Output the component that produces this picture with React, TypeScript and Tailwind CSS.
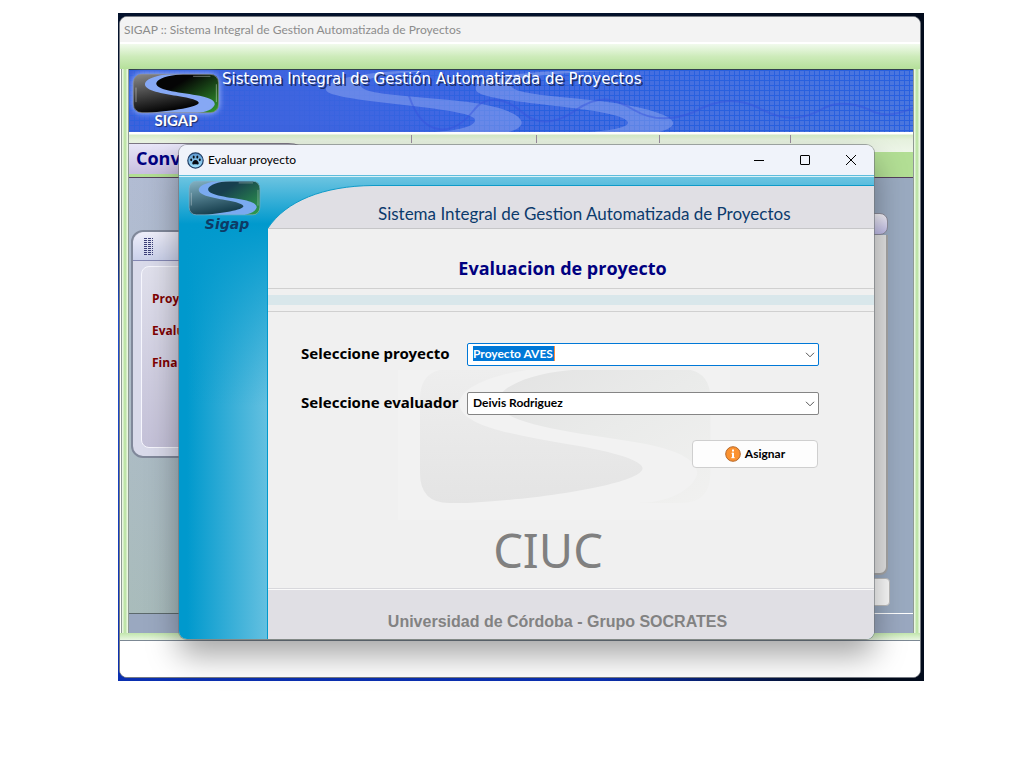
import { useState } from "react";

const LOWER =
  "M82 3C50 10 35 20 35 30C35 50 90 58 130 65C175 72 197 80 197 86C197 98 120 112 42 116H26Q0 116 0 90V26Q0 0 26 0H100Z";
const UPPER =
  "M132 1C90 5 69 18 69 28C69 50 150 56 200 65C235 72 247 82 245 92C240 105 220 116 192 116H231Q257 116 257 90V26Q257 0 231 0H150Z";

type LogoProps = { id: string; from: string; mid: string; to: string; river: string; className: string };

function Logo({ id, from, mid, to, river, className }: LogoProps) {
  return (
    <svg viewBox="-4 -4 265 124" preserveAspectRatio="none" className={className} aria-hidden="true">
      <defs>
        <linearGradient id={`${id}-a`} x1="0" y1="0" x2="0.3" y2="1">
          <stop offset="0" stopColor={from} />
          <stop offset="1" stopColor={mid} />
        </linearGradient>
        <linearGradient id={`${id}-b`} x1="0" y1="0" x2="1" y2="1">
          <stop offset="0.3" stopColor={mid} />
          <stop offset="1" stopColor={to} />
        </linearGradient>
      </defs>
      <rect width="257" height="116" rx="26" fill={river} />
      <path d={LOWER} fill={`url(#${id}-a)`} />
      <path d={UPPER} fill={`url(#${id}-b)`} />
      <path d="M180 6H232M8 40V84M250 30V84" stroke="#fff" strokeOpacity="0.4" strokeWidth="3" fill="none" />
      <rect width="257" height="116" rx="26" fill="none" stroke={from} strokeOpacity="0.7" strokeWidth="3" />
    </svg>
  );
}

function Watermark() {
  return (
    <svg viewBox="0 0 332 150" className="h-[150px] w-[332px]" aria-hidden="true">
      <defs>
        <linearGradient id="wm-a" x1="0" y1="0" x2="0" y2="1">
          <stop offset="0" stopColor="#eeeeee" />
          <stop offset="1" stopColor="#e4e4e4" />
        </linearGradient>
        <linearGradient id="wm-b" x1="0" y1="0" x2="1" y2="1">
          <stop offset="0" stopColor="#e3e3e3" />
          <stop offset="0.5" stopColor="#eaebea" />
          <stop offset="1" stopColor="#f1f1f0" />
        </linearGradient>
      </defs>
      <rect width="332" height="150" fill="#f2f2f2" />
      <g transform="translate(22 -1) scale(1.13 1.155)">
        <path d={LOWER} fill="url(#wm-a)" />
        <path d={UPPER} fill="url(#wm-b)" />
      </g>
    </svg>
  );
}

function Paw() {
  return (
    <svg viewBox="0 0 17 17" className="size-[17px]" aria-hidden="true">
      <defs>
        <linearGradient id="paw" x1="0" y1="0" x2="0" y2="1">
          <stop offset="0" stopColor="#5d97cf" />
          <stop offset="1" stopColor="#a4e6ff" />
        </linearGradient>
      </defs>
      <circle cx="8.500" cy="8.500" r="7.700" fill="url(#paw)" stroke="#223f66" strokeWidth="1.200" />
      <g fill="#080c14">
        <ellipse cx="6.700" cy="5" rx="1" ry="1.600" />
        <ellipse cx="10.300" cy="5" rx="1" ry="1.600" />
        <ellipse cx="4.200" cy="7.800" rx="1" ry="1.400" />
        <ellipse cx="12.800" cy="7.800" rx="1" ry="1.400" />
        <path d="M8.500 8C6.700 8 5.200 10 5.300 11.400C5.400 13 7 12.300 8.500 12.300S11.600 13 11.700 11.400C11.800 10 10.300 8 8.500 8Z" />
      </g>
    </svg>
  );
}

function BannerArt() {
  return (
    <svg
      viewBox="0 0 784 62"
      preserveAspectRatio="none"
      className="absolute inset-0 size-full"
      aria-hidden="true"
    >
      <defs>
        <pattern id="grid" width="5" height="5" patternUnits="userSpaceOnUse">
          <path d="M0 .5H5M.5 0V5" stroke="#2860df" />
        </pattern>
        <linearGradient id="gridfade">
          <stop offset="0" stopColor="#fff" stopOpacity="0.7" />
          <stop offset="0.12" stopColor="#fff" stopOpacity="0.4" />
          <stop offset="0.2" stopColor="#fff" stopOpacity="0.1" />
          <stop offset="0.3" stopColor="#fff" stopOpacity="0.3" />
          <stop offset="0.5" stopColor="#fff" />
        </linearGradient>
        <mask id="gridmask">
          <rect width="784" height="62" fill="url(#gridfade)" />
        </mask>
      </defs>
      <rect width="784" height="62" fill="url(#grid)" mask="url(#gridmask)" />
      <path
        d="M270 1C220 4 195 12 197 20C200 32 330 36 345 48C350 56 330 60 306 62H380C400 56 396 46 370 38C330 26 235 28 232 16C232 8 260 3 300 1Z"
        fill="#8fa8f0"
        fillOpacity="0.5"
      />
      <path
        d="M430 1C370 4 345 10 347 20C350 34 490 36 499 52C500 58 480 60 462 62H530C552 56 548 48 520 40C470 26 388 28 382 16C380 8 420 3 480 1Z"
        fill="#8fa8f0"
        fillOpacity="0.5"
      />
      <path
        d="M280 26C295 70 325 66 345 40C355 26 375 26 393 42C405 54 425 56 447 40C470 24 485 28 505 40C525 52 545 50 565 42C590 28 610 28 630 38C655 52 675 50 695 38C710 30 730 34 745 42C760 48 775 42 784 38"
        fill="none"
        stroke="#3553dc"
        strokeOpacity="0.45"
        strokeWidth="2"
      />
    </svg>
  );
}

type ComboProps = {
  id: string;
  label: string;
  value: string;
  options: string[];
  onChange: (value: string) => void;
  active?: boolean;
};

function Combo({ id, label, value, options, onChange, active }: ComboProps) {
  return (
    <div className="flex h-[23px] items-start">
      <label
        htmlFor={id}
        className="w-[166px] shrink-0 font-['Noto_Sans',sans-serif] text-[15px] leading-5 font-bold whitespace-nowrap text-black"
      >
        {label}
      </label>
      <div className="relative flex-1">
        <select
          id={id}
          value={value}
          onChange={(e) => onChange(e.target.value)}
          className={
            active
              ? "block h-[23px] w-full appearance-none rounded-xs border border-[#0078d7] bg-white bg-[linear-gradient(#ff8a3c,#ff8a3c),linear-gradient(#0078d7,#0078d7)] bg-[length:1px_15px,81px_15px] bg-[position:86px_2px,5px_2px] bg-no-repeat px-[5px] pb-0.5 font-[Lato,sans-serif] text-[12px] leading-5 font-bold text-white outline-none"
              : "block h-[23px] w-full appearance-none rounded-xs border border-[#858585] bg-white px-[5px] pb-0.5 font-[Lato,sans-serif] text-[12px] leading-5 font-bold text-black outline-none"
          }
        >
          {options.map((o) => (
            <option key={o} className="text-black">
              {o}
            </option>
          ))}
        </select>
        <svg
          viewBox="0 0 10 6"
          className="pointer-events-none absolute top-[9px] right-1 h-1.5 w-2.5"
          fill="none"
          stroke="#555"
          aria-hidden="true"
        >
          <path d="M1 .8L5 4.800L9 .8" />
        </svg>
      </div>
    </div>
  );
}

function MainWindow() {
  return (
    <div className="flex flex-col overflow-hidden rounded-lg border border-[#777b83] bg-white">
      <div className="flex h-[25px] items-center bg-[#f3f3f3] pl-1 font-[Lato,sans-serif] text-[12px] leading-4 text-[#8c8c8c]">
        SIGAP :: Sistema Integral de Gestion Automatizada de Proyectos
      </div>
      <div className="mt-[2px] h-[25px] bg-linear-to-b from-[#f1faed] via-[#cdebba] via-50% to-[#b5e09a]" />
      <div className="flex pl-px">
        <div className="w-2 shrink-0 border-x border-[#8f9a94] bg-linear-to-r from-[#f4fbef] via-[#b4e09a] to-[#f4fbef]" />
        <div className="min-w-0 flex-1">
          <header className="relative h-[63px] border-t border-[#32404e] bg-linear-to-r from-[#3c62dc] via-[#4067e2] via-40% to-[#4b76de]">
            <BannerArt />
            <div className="relative flex items-start pl-[3px]">
              <div className="flex w-[88px] flex-col items-center">
                <Logo
                  id="main"
                  from="#8a8a8a"
                  mid="#050505"
                  to="#35a030"
                  river="#86a8f4"
                  className="mt-[3px] h-[41px] w-[88px] drop-shadow-[0_0_3px_#a8c0ff]"
                />
                <span className="font-[Lato,sans-serif] text-[15px] leading-3 font-bold text-white [text-shadow:1px_1px_1px_#1a2a66]">
                  SIGAP
                </span>
              </div>
              <span className="pl-[2px] font-['DejaVu_Sans',sans-serif] text-[15px] leading-[18px] whitespace-nowrap text-white [text-shadow:2px_2px_0_#1c2f6b]">
                Sistema Integral de Gestión Automatizada de Proyectos
              </span>
            </div>
          </header>
          <nav className="flex h-[46px] flex-col border-b border-[#54405c] bg-[linear-gradient(#fff_2px,#d4eac6_3px,#e6f1de_8px,#eef6e9_20px,#b2de94_20px,#b2de94)]">
            <div className="mt-[3px] flex h-2">
              <div className="w-[283px] border-r border-[#9a8c9e]" />
              <div className="w-[125px] border-r border-[#9a8c9e]" />
              <div className="w-[123px] border-r border-[#9a8c9e]" />
              <div className="w-[131px] border-r border-[#9a8c9e]" />
            </div>
            <a
              href="#conv"
              className="flex h-[31px] w-[190px] items-center rounded-tr-[40px] border-t border-[#7b7583] bg-linear-to-b from-[#e8e6f8] to-[#c8bfdf] pb-0.5 pl-[7px] text-[18px] leading-6 font-bold text-[#000080]"
            >
              Conv
            </a>
          </nav>
          <div className="flex h-[435px] items-start justify-between bg-[linear-gradient(to_right,transparent,#9aaac0_45%),linear-gradient(#b2bcd3,#a9bcbb)]">
            <div className="mt-[52px] ml-[2px] w-[170px] rounded-xl border-2 border-[#80889a] bg-[#d9daea]">
              <div className="flex h-[29px] items-center rounded-t-xl border-b border-[#8488b4] bg-linear-to-b from-[#eeeefa] to-[#cbd1ea] pl-2.5">
                <div className="h-[17px] w-[10px] bg-[conic-gradient(from_90deg_at_1px_1px,transparent_75%,#3c3f78_75%)] bg-[length:4px_2px]" />
              </div>
              <div className="m-2 mt-[5px] flex h-[182px] flex-col gap-3 rounded-lg border border-[#f6f6fd] bg-linear-to-b from-[#e0e0ec] to-[#c4c1d8] pt-[22px] pl-2.5 text-[12px] leading-5 font-bold text-[#800000]">
                <a href="#proy">Proy</a>
                <a href="#evalu">Evalu</a>
                <a href="#fina">Fina</a>
              </div>
            </div>
            <div className="mt-[35px] mr-[23px] flex flex-col items-end">
              <div className="mr-[2px] h-[22px] w-[80px] rounded-lg border border-[#8e8e9c] bg-linear-to-b from-[#f6f4fa] to-[#c0bce8]" />
              <div className="mr-[2px] h-[340px] w-[80px] rounded-b-lg border-r-2 border-b-2 border-[#a6a6a6] bg-[#e4e4e4]" />
              <div className="mt-[3px] h-[28px] w-[80px] rounded border border-[#bdbdbd] bg-[#fbfbfb]" />
            </div>
          </div>
          <div className="h-px bg-linear-to-r from-[#5c696c] from-30% to-white to-60%" />
          <div className="h-[19px] bg-[#9aa8c0]" />
        </div>
        <div className="w-[7px] shrink-0 border-l border-[#8f9a94] bg-linear-to-r from-[#f4fbef] via-[#b4e09a] to-[#f4fbef]" />
      </div>
      <div className="h-2 border-b border-[#7c8894] bg-linear-to-b from-[#c2e6ad] to-[#e9f6e2]" />
      <div className="h-[36px] bg-white" />
    </div>
  );
}

function Dialog() {
  const [project, setProject] = useState("Proyecto AVES");
  const [reviewer, setReviewer] = useState("Deivis Rodriguez");
  return (
    <section
      role="dialog"
      aria-label="Evaluar proyecto"
      className="absolute top-[132px] right-[50px] left-[61px] flex flex-col overflow-hidden rounded-lg shadow-[0_0_0_1px_rgba(110,115,120,0.6),0_16px_32px_rgba(0,0,0,0.36)]"
    >
      <div className="flex h-[30px] shrink-0 items-center bg-[#f0f3fa] pl-2">
        <Paw />
        <h2 className="flex-1 pl-1 font-[Lato,sans-serif] text-[12px] leading-4 text-black">
          Evaluar proyecto
        </h2>
        <button aria-label="Minimizar" className="flex h-7 w-[46px] items-center justify-center">
          <svg viewBox="0 0 10 10" className="size-2.5" stroke="#000" aria-hidden="true">
            <path d="M0 5.500H10" />
          </svg>
        </button>
        <button aria-label="Maximizar" className="flex h-7 w-[46px] items-center justify-center">
          <svg viewBox="0 0 10 10" className="size-2.5" fill="none" stroke="#000" aria-hidden="true">
            <rect x=".5" y=".5" width="9" height="9" rx=".5" />
          </svg>
        </button>
        <button aria-label="Cerrar" className="flex h-7 w-[46px] items-center justify-center">
          <svg viewBox="0 0 10 10" className="size-2.5" stroke="#000" aria-hidden="true">
            <path d="M0 0L10 10M10 0L0 10" />
          </svg>
        </button>
      </div>
      <div className="flex border-t border-[#5fbddb] bg-[linear-gradient(#d9f1f8_1px,#6cc4e1_1px,#0099cd_48px,transparent_48px),linear-gradient(#0099cd_48px,transparent_230px),linear-gradient(to_right,#0099cd_8px,#64c0e0_88px)]">
        <aside className="flex w-[88px] shrink-0 flex-col items-center">
          <Logo
            id="side"
            from="#84b3c4"
            mid="#173f4e"
            to="#2fa14c"
            river="#7aaaf0"
            className="mt-1 ml-[3px] h-[36px] w-[73px]"
          />
          <span className="ml-2 font-['DejaVu_Sans',sans-serif] text-[14px] leading-4 font-bold text-[#0d3b66] italic">
            Sigap
          </span>
        </aside>
        <div className="min-w-0 flex-1">
          <div className="mt-[9px] ml-px flex h-[44px]">
            <svg viewBox="0 0 105 44" className="h-[44px] w-[105px] shrink-0" aria-hidden="true">
              <path d="M0 43C18 16 55 1 105 .5V44H0Z" fill="#e0dfe4" />
              <path d="M0 43C18 16 55 1 105 .5" fill="none" stroke="#0e9ac8" />
              <path d="M0 43.500H105" stroke="#c6c6c8" />
            </svg>
            <div className="flex flex-1 items-center border-t border-b border-t-[#0e9ac8] border-b-[#c6c6c8] bg-[#e0dfe4] pt-3.5 pl-[5px] font-[Lato,sans-serif] text-[17px] leading-6 whitespace-nowrap text-[#0b3a6c]">
              Sistema Integral de Gestion Automatizada de Proyectos
            </div>
          </div>
          <div className="border-l border-[#0099cd] bg-[#f0f0f0]">
            <h1 className="flex h-[60px] items-center justify-center border-b border-[#d0d0d0] pt-[18px] pr-[17px] text-[18px] leading-6 font-bold text-[#000080]">
              Evaluacion de proyecto
            </h1>
            <div className="h-[23px] border-b border-[#d0d0d0] pt-1.5">
              <div className="h-2.5 bg-[#d9e7eb]" />
            </div>
            <div className="relative h-[276px] pt-[31px] pr-[55px] pl-[33px]">
              <div className="absolute top-[58px] left-[130px]">
                <Watermark />
              </div>
              <form className="relative flex flex-col" onSubmit={(e) => e.preventDefault()}>
                <Combo
                  id="project"
                  label="Seleccione proyecto"
                  value={project}
                  options={["Proyecto AVES"]}
                  onChange={setProject}
                  active
                />
                <div className="h-[26px]" />
                <Combo
                  id="reviewer"
                  label="Seleccione evaluador"
                  value={reviewer}
                  options={["Deivis Rodriguez"]}
                  onChange={setReviewer}
                />
                <button className="mt-[25px] mr-px flex h-7 w-[126px] items-center justify-center gap-1 self-end rounded border border-[#cfcfcf] bg-[#fdfdfd] font-[Lato,sans-serif] text-[12px] leading-4 font-bold text-black">
                  <svg viewBox="0 0 16 16" className="size-4" aria-hidden="true">
                    <circle cx="8" cy="8" r="7.300" fill="#fb9230" stroke="#b7692a" />
                    <path d="M8 3.500V5.500M8 6.800V12" stroke="#fff" strokeWidth="2" fill="none" />
                    <path d="M6.500 7.300H8M6.300 11.700H9.700" stroke="#fff" fill="none" />
                  </svg>
                  Asignar
                </button>
              </form>
              <p className="relative mt-[55px] pr-6 text-center font-['Noto_Sans',sans-serif] text-[47px] leading-[54px] text-[#808080]">
                CIUC
              </p>
            </div>
            <footer className="flex h-[51px] items-center justify-center border-t border-[#d8d8dc] bg-[#e0dfe4] pt-4 pr-[27px] font-['Liberation_Sans',sans-serif] text-[16px] leading-5 font-bold text-[#828282] shadow-[inset_0_1px_0_#fafafa]">
              Universidad de Córdoba - Grupo SOCRATES
            </footer>
          </div>
        </div>
      </div>
    </section>
  );
}

export default function App() {
  return (
    <main className="min-h-screen bg-white pt-[13px] pr-[100px] pl-[118px] font-['Open_Sans','Noto_Sans',sans-serif]">
      <div className="relative min-w-[780px] bg-[linear-gradient(to_right,transparent_60%,#020b1c_90%),linear-gradient(#04122c_30%,#1f4fd0_45%,#0a2fb0)] pt-[3px] pr-[3px] pb-[3px] pl-[1px]">
        <MainWindow />
        <Dialog />
      </div>
    </main>
  );
}
